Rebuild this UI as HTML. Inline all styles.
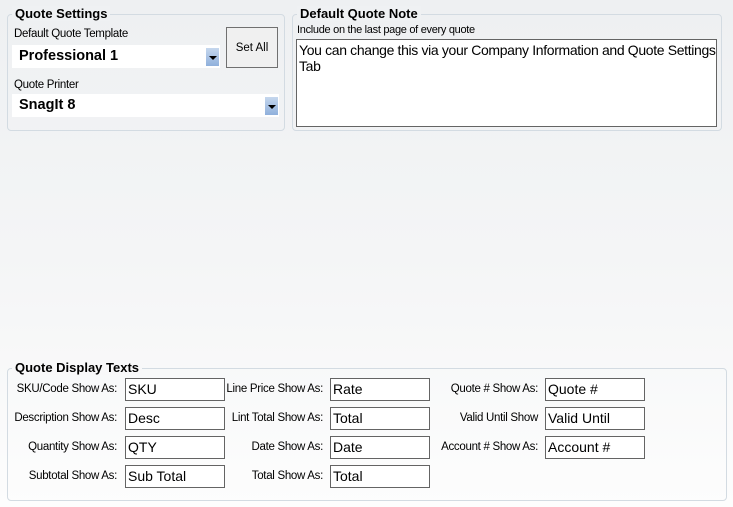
<!DOCTYPE html>
<html><head><meta charset="utf-8"><style>
*{margin:0;padding:0;box-sizing:border-box}
body{width:733px;height:507px;overflow:hidden;position:relative;font-family:"Liberation Sans",Arial,sans-serif;background:linear-gradient(#eef0f2 0%,#f4f5f6 50%,#fdfdfd 100%);color:#000}
.a{position:absolute}
.grp{position:absolute;border:1px solid #d3dbe2;border-radius:4px}
.ttl{position:absolute;font-weight:bold;font-size:13px;padding:0 3px;background:#eff1f3;line-height:15px}
.lbl{position:absolute;font-size:11.5px;letter-spacing:-0.3px;white-space:nowrap}
.combo{position:absolute;background:#fff;font-weight:bold;font-size:14.5px;padding-left:7px;line-height:23px}
.dd{position:absolute;top:3px;right:1px;width:13px;height:18px;background:linear-gradient(#c5d7ee,#8fb0dc)}
.dd:after{content:"";position:absolute;left:3px;top:8px;border-left:4px solid transparent;border-right:4px solid transparent;border-top:4px solid #000}
.tb{position:absolute;width:100px;height:23px;border:1px solid #646464;background:#fff;font-size:14px;padding-left:2px;line-height:20px}
.r{text-align:right}
</style></head><body>
<div class="grp" style="left:7px;top:14px;width:278px;height:117px"></div>
<div class="ttl" style="left:12px;top:6px">Quote Settings</div>
<div class="lbl" style="left:14px;top:28px">Default Quote Template</div>
<div class="combo" style="left:12px;top:45px;width:208px;height:23px">Professional 1<div class="dd"></div></div>
<div class="a" style="left:226px;top:27px;width:52px;height:41px;border:1px solid #707070;background:#f0f0f0;font-size:11.5px;text-align:center;line-height:40px">Set All</div>
<div class="lbl" style="left:14px;top:79px">Quote Printer</div>
<div class="combo" style="left:12px;top:94px;width:267px;height:23px">SnagIt 8<div class="dd"></div></div>

<div class="grp" style="left:292px;top:14px;width:430px;height:117px"></div>
<div class="ttl" style="left:297px;top:6px">Default Quote Note</div>
<div class="lbl" style="left:297px;top:24px;font-size:11px">Include on the last page of every quote</div>
<div class="a" style="left:296px;top:39px;width:421px;height:88px;border:1px solid #646464;background:#fff;font-size:14px;letter-spacing:-0.35px;line-height:16px;padding:2px 0 0 2px">You can change this via your Company Information and Quote Settings Tab</div>

<div class="grp" style="left:7px;top:368px;width:720px;height:133px"></div>
<div class="ttl" style="left:12px;top:360px;background:#f8f8f9">Quote Display Texts</div>

<div class="lbl r" style="left:0;width:117px;top:383px">SKU/Code Show As:</div>
<div class="lbl r" style="left:0;width:117px;top:412px">Description Show As:</div>
<div class="lbl r" style="left:0;width:117px;top:441px">Quantity Show As:</div>
<div class="lbl r" style="left:0;width:117px;top:470px">Subtotal Show As:</div>
<div class="tb" style="left:125px;top:378px">SKU</div>
<div class="tb" style="left:125px;top:407px">Desc</div>
<div class="tb" style="left:125px;top:436px">QTY</div>
<div class="tb" style="left:125px;top:465px">Sub Total</div>

<div class="lbl r" style="left:200px;width:123px;top:383px">Line Price Show As:</div>
<div class="lbl r" style="left:200px;width:123px;top:412px">Lint Total Show As:</div>
<div class="lbl r" style="left:200px;width:123px;top:441px">Date Show As:</div>
<div class="lbl r" style="left:200px;width:123px;top:470px">Total Show As:</div>
<div class="tb" style="left:330px;top:378px">Rate</div>
<div class="tb" style="left:330px;top:407px">Total</div>
<div class="tb" style="left:330px;top:436px">Date</div>
<div class="tb" style="left:330px;top:465px">Total</div>

<div class="lbl r" style="left:400px;width:138px;top:383px">Quote # Show As:</div>
<div class="lbl r" style="left:400px;width:138px;top:412px">Valid Until Show</div>
<div class="lbl r" style="left:400px;width:138px;top:441px">Account # Show As:</div>
<div class="tb" style="left:545px;top:378px">Quote #</div>
<div class="tb" style="left:545px;top:407px">Valid Until</div>
<div class="tb" style="left:545px;top:436px">Account #</div>
</body></html>
